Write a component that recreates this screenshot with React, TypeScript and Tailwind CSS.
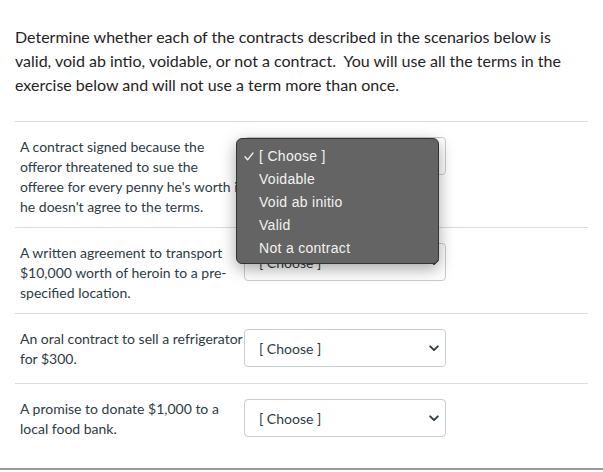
import React from 'react';

interface Row {
  text: string;
  open?: boolean;
}

const rows: Row[] = [
  {
    text: "A contract signed because the offeror threatened to sue the offeree for every penny he's worth if he doesn't agree to the terms.",
    open: true,
  },
  { text: 'A written agreement to transport $10,000 worth of heroin to a pre-specified location.' },
  { text: 'An oral contract to sell a refrigerator for $300.' },
  { text: 'A promise to donate $1,000 to a local food bank.' },
];

const options = ['Voidable', 'Void ab initio', 'Valid', 'Not a contract'];

const Chevron: React.FC = () => (
  <svg width="10" height="7" viewBox="0 0 10 7" fill="none">
    <path d="M1.2 1.3 L5 5.1 L8.8 1.3" stroke="#2d3b45" strokeWidth="1.9" strokeLinecap="round" strokeLinejoin="round" />
  </svg>
);

const Check: React.FC = () => (
  <svg width="10" height="9" viewBox="0 0 10 9" fill="none">
    <path d="M1 4.8 L3.6 7.8 L9 1" stroke="#f2f2f2" strokeWidth="1.3" strokeLinecap="round" strokeLinejoin="round" />
  </svg>
);

const ChooseBox: React.FC<{ open?: boolean }> = ({ open }) => (
  <div className="relative w-[202px] h-[38px] mb-[6px] shrink-0">
    <div className="flex items-center justify-between w-full h-full border border-[#c7cdd1] rounded-[4px] bg-white pl-[14px] pr-[6px] text-[14px] text-[#2d3b45]">
      <span>[ Choose ]</span>
      <Chevron />
    </div>

    {/* native popup, shown open over the first box */}
    {open && (
      <div className="absolute left-[-8px] top-[1px] z-10 w-[203px] h-[126px] bg-[#646464] border border-[#333333] rounded-[6px] shadow-[0_5px_16px_rgba(0,0,0,0.35)] pt-[6px] font-['Liberation_Sans',sans-serif] text-[14px] tracking-[0.3px] text-[#f2f2f2]">
        <div className="flex items-center h-[23px]">
          <span className="flex w-[22px] shrink-0 pl-[7px]">
            <Check />
          </span>
          <span>[ Choose ]</span>
        </div>
        {options.map((opt) => (
          <div key={opt} className="flex items-center h-[23px] pl-[22px]">
            {opt}
          </div>
        ))}
      </div>
    )}
  </div>
);

const App: React.FC = () => {
  return (
    <div className="w-[603px] h-[472px] bg-white overflow-hidden font-['Lato',sans-serif] text-[#2d3b45]">
      <div className="px-[15px] pt-[25px]">
        {/* Question text */}
        <p className="text-[16px] leading-[24px] text-[#1f2326]">
          Determine whether each of the contracts described in the scenarios below is valid, void ab intio, voidable, or not a contract.&nbsp; You will use all the terms in the exercise below and will not use a term more than once.
        </p>

        {/* Answer rows */}
        <div className="mt-[24px]">
          {rows.map((row, index) => (
            <div key={index} className="flex items-start border-t border-[#d9dcde] pl-[5px] pt-[15px] pb-[10px]">
              <p className="w-[224px] shrink-0 text-[14px] leading-[20px] text-[#2d3b45]">{row.text}</p>
              <ChooseBox open={row.open} />
            </div>
          ))}
        </div>
      </div>

      <div className="mt-[15px] border-t-2 border-[#9a9a9a]" />
    </div>
  );
};

export default App;
